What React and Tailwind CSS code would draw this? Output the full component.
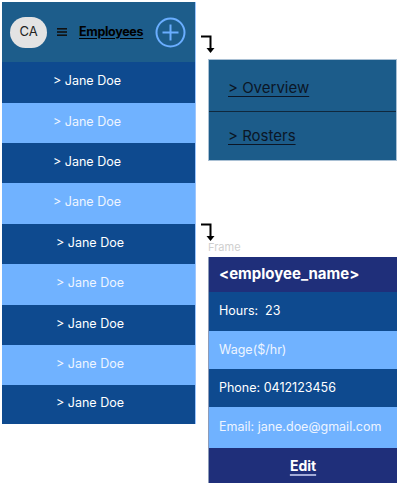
import React from 'react';

const rows = [
  { h: 'h-[41px]', dark: true, pad: 'pl-[51px]' },
  { h: 'h-[40px]', dark: false, pad: 'pl-[51px]' },
  { h: 'h-[40px]', dark: true, pad: 'pl-[51px]' },
  { h: 'h-[41px]', dark: false, pad: 'pl-[51px]' },
  { h: 'h-[40px]', dark: true, pad: 'pl-[54px]' },
  { h: 'h-[41px]', dark: false, pad: 'pl-[54px]' },
  { h: 'h-[40px]', dark: true, pad: 'pl-[54px]' },
  { h: 'h-[40px]', dark: false, pad: 'pl-[54px]' },
  { h: 'h-[39px]', dark: true, pad: 'pl-[54px]' },
];

const BentArrow = () => (
  <svg width="16" height="19" viewBox="0 0 16 19" className="block">
    <path d="M1 1.5 H10.5 V14" fill="none" stroke="#000" strokeWidth="2" />
    <polygon points="6.5,13 14.5,13 10.5,18" fill="#000" />
  </svg>
);

const App = () => {
  return (
    <div className="w-[405px] h-[490px] bg-white flex items-start font-['Inter',sans-serif]">
      {/* Left - employee list */}
      <div className="ml-[2px] mt-[2px] w-[194px] flex flex-col border-r border-[#9cc6ff]">
        <div className="h-[60px] bg-[#1d5d8b] flex items-center pl-[8px]">
          <div className="w-[37px] h-[31px] rounded-full bg-[#e3e3e3] flex items-center justify-center text-[13px] text-[#222]">
            CA
          </div>
          <svg width="10" height="8" viewBox="0 0 10 8" className="ml-[10px]">
            <rect x="0" y="0" width="10" height="1.6" fill="#111" />
            <rect x="0" y="3.2" width="10" height="1.6" fill="#111" />
            <rect x="0" y="6.4" width="10" height="1.6" fill="#111" />
          </svg>
          <span className="ml-[12px] text-[12.5px] font-bold text-black underline underline-offset-2 tracking-[-0.3px]">
            Employees
          </span>
          <svg width="31" height="31" viewBox="0 0 31 31" className="ml-[12px]">
            <circle cx="15.5" cy="15.5" r="14" fill="none" stroke="#6aaeff" strokeWidth="2" />
            <path d="M15.5 7.5 V23.5 M7.5 15.5 H23.5" stroke="#6aaeff" strokeWidth="2" />
          </svg>
        </div>
        {rows.map((r, i) => (
          <div
            key={i}
            className={`${r.h} ${r.pad} flex items-center pb-[2px] text-[12.5px] ${
              r.dark ? 'bg-[#0e4a8f] text-white' : 'bg-[#70b2ff] text-[#eef5ff]'
            }`}
          >
            &gt; Jane Doe
          </div>
        ))}
      </div>

      {/* Right column */}
      <div className="ml-[4px] w-[197px] flex flex-col">
        <div className="mt-[35px]">
          <BentArrow />
        </div>
        <div className="ml-[8px] mt-[5px] w-[189px] bg-[#1c5c8a] border border-[#a9c0d4] text-[15px] text-[#0b1626]">
          <div className="h-[52px] flex items-center pl-[19px] pt-[6px] border-b border-[#10283d]">
            <span className="underline underline-offset-[3px]">&gt; Overview</span>
          </div>
          <div className="h-[48px] flex items-center pl-[19px]">
            <span className="underline underline-offset-[3px]">&gt; Rosters</span>
          </div>
        </div>
        <div className="mt-[62px]">
          <BentArrow />
        </div>
        <div className="ml-[8px] h-[14px] -mt-[2px] text-[11px] leading-[14px] text-[#cfcfcf]">Frame</div>
        <div className="ml-[8px] mt-[3px] w-[189px] flex flex-col border-l border-[#8d9bb8] text-[12.5px]">
          <div className="h-[35px] bg-[#1f2f7a] flex items-center pl-[10px] text-[15px] font-bold text-white">
            &lt;employee_name&gt;
          </div>
          <div className="h-[39px] bg-[#0e4a8f] flex items-center pl-[10px] text-white">Hours:&nbsp; 23</div>
          <div className="h-[38px] bg-[#70b2ff] flex items-center pl-[10px] text-[#eef5ff]">Wage($/hr)</div>
          <div className="h-[38px] bg-[#0e4a8f] flex items-center pl-[10px] text-white">Phone: 0412123456</div>
          <div className="h-[41px] bg-[#70b2ff] flex items-center pl-[10px] text-[#eef5ff]">Email: jane.doe@gmail.com</div>
          <div className="h-[35px] bg-[#1f2f7a] flex items-center justify-center text-[14px] font-bold text-white">
            <span className="underline decoration-2 decoration-[#a3acd8] underline-offset-[3px]">Edit</span>
          </div>
        </div>
      </div>
    </div>
  );
};

export default App;
